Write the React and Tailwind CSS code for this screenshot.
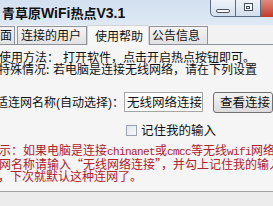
export default function App() {
  const mono = "font-['Liberation_Mono',monospace] text-[11px] tracking-[-0.6px] leading-[12px]";
  return (
    <div className="w-[273px] h-[206px] overflow-hidden bg-[#f2f2f2] font-['Noto_Sans_CJK_SC',sans-serif] text-[#111] relative">
      {/* title bar */}
      <div className="h-[25px] flex items-start justify-between bg-gradient-to-b from-[#d2e0f0] to-[#dfe9f5]">
        <div className="pl-[2px] pt-[5px] text-[13px] leading-[16px] font-bold whitespace-nowrap">
          青草原<span className="font-['Liberation_Sans',sans-serif] text-[14px]">WiFi</span>热点<span className="font-['Liberation_Sans',sans-serif] text-[14px]">V3.1</span>
        </div>
        <div className="flex items-start">
          <div className="w-[26px] h-[17px] border border-t-0 border-[#5c6b80] rounded-bl-[5px] bg-gradient-to-b from-[#eef3f9] to-[#d3dfec] flex justify-center pt-[9px]">
            <div className="w-[14px] h-[4px] border border-[#44505f] rounded-[2px] bg-white"></div>
          </div>
          <div className="w-[25px] h-[17px] border-b border-r border-[#5c6b80] bg-gradient-to-b from-[#eef3f9] to-[#d3dfec] flex justify-center pt-[3px]">
            <div className="w-[9px] h-[8px] border border-[#44505f] bg-white flex items-center justify-center">
              <div className="w-[4px] h-[3px] border border-[#44505f]"></div>
            </div>
          </div>
          <div className="w-[12px] h-[17px] bg-gradient-to-b from-[#e08a7c] to-[#c2362a]"></div>
        </div>
      </div>

      {/* tabs */}
      <div className="h-[20px] flex items-end border-b border-[#8e939b] text-[12px] leading-[16px] whitespace-nowrap">
        <div className="ml-[-4px] w-[19px] h-[18px] pl-[4px] border border-l-0 border-b-0 border-[#8e939b] bg-gradient-to-b from-[#f3f3f3] to-[#e2e2e2]">面</div>
        <div className="ml-[2px] w-[70px] h-[18px] pl-[3px] border border-b-0 border-[#8e939b] bg-gradient-to-b from-[#f3f3f3] to-[#e2e2e2]">连接的用户</div>
        <div className="w-[62px] h-[20px] pl-[7px] pt-[2px] mb-[-1px] border border-b-0 border-[#d4d4d4] bg-[#f7f7f7] relative z-10">使用帮助</div>
        <div className="w-[59px] h-[18px] pl-[2px] border border-b-0 border-[#8e939b] bg-gradient-to-b from-[#f3f3f3] to-[#e2e2e2]">公告信息</div>
      </div>

      {/* content */}
      <div className="bg-[#f5f5f5] pt-[6px] h-[146px] text-[12px] leading-[12px] whitespace-nowrap">
        <div className="ml-[-1px]">使用方法：<span className="ml-[4px]">打开软件，点击开启热点按钮即可。</span></div>
        <div className="ml-[-2px]">特殊情况<span className="inline-block w-[7px]">:</span>若电脑是连接无线网络，请在下列设置</div>

        <div className="mt-[17px] flex items-center h-[20px]">
          <div className="ml-[-4px] w-[128px] text-[12px]">
            适连网名称<span className="font-['Liberation_Sans',sans-serif]">(</span>自动选择<span className="font-['Liberation_Sans',sans-serif]">)</span>：
          </div>
          <div className="w-[95px] h-[20px] border border-[#a6a6a6] bg-white pl-[2px] flex items-center text-[12.5px]">无线网络连接</div>
          <div className="ml-[10px] w-[60px] h-[21px] shrink-0 border border-[#707070] rounded-[3px] bg-gradient-to-b from-[#f4f4f4] to-[#dcdcdc] pl-[6px] flex items-center text-[12.5px]">查看连接</div>
        </div>

        <div className="mt-[11px] h-[14px] flex items-center pl-[126px]">
          <div className="w-[11px] h-[11px] border border-[#9aa3ad] bg-gradient-to-br from-[#e3e7ec] to-[#f8f9fa]"></div>
          <span className="ml-[4px] text-[12.5px]">记住我的输入</span>
        </div>

        <div className="mt-[7px] ml-[-1px] text-[#b3202a] text-[12px] leading-[12px]">
          <div>示：如果电脑是连接<span className={mono}>chinanet</span>或<span className={mono}>cmcc</span>等无线<span className={mono}>wifi</span>网络连接</div>
          <div>网名称请输入“无线网络连接”，并勾上记住我的输入</div>
          <div className="ml-[-1px]">，下次就默认这种连网了。</div>
        </div>
      </div>
      <div className="border-t border-[#a0a0a0] bg-[#ececec] h-[20px]"></div>
    </div>
  );
}
